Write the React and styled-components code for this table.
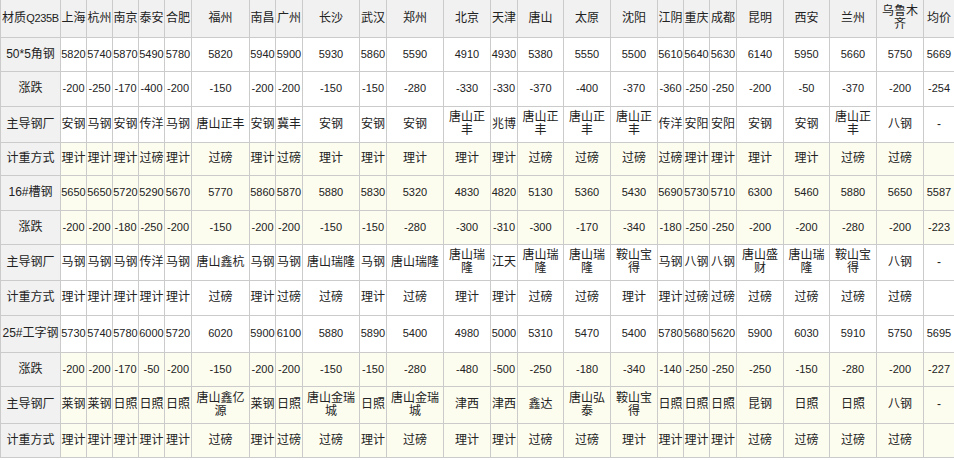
import React from 'react';
import styled, { createGlobalStyle } from 'styled-components';

const GlobalStyle = createGlobalStyle`
  html, body {
    margin: 0;
    padding: 0;
    background: #fff;
  }
  body {
    font-family: "Liberation Sans", "Noto Sans CJK SC", sans-serif;
    color: #222;
  }
`;

const COLS = [60, 26, 26, 26, 26, 27, 58, 26, 27, 57, 27, 57, 47, 27, 46, 47, 47, 26, 26, 27, 47, 46, 47, 47, 31];

const CITIES = [
  '上海', '杭州', '南京', '泰安', '合肥', '福州', '南昌', '广州', '长沙', '武汉', '郑州', '北京',
  '天津', '唐山', '太原', '沈阳', '江阴', '重庆', '成都', '昆明', '西安', '兰州', '乌鲁木齐', '均价',
];

const split = (s) => s.split(' ');

// label, cells, height, cream row, numeric row
const ROWS = [
  ['50*5角钢', split('5820 5740 5870 5490 5780 5820 5940 5900 5930 5860 5590 4910 4930 5380 5550 5500 5610 5640 5630 6140 5950 5660 5750 5669'), 34, false, true],
  ['涨跌', split('-200 -250 -170 -400 -200 -150 -200 -200 -150 -150 -280 -330 -330 -370 -400 -370 -360 -250 -250 -200 -50 -370 -200 -254'), 35, false, true],
  ['主导钢厂', split('安钢 马钢 安钢 传洋 马钢 唐山正丰 安钢 冀丰 安钢 安钢 安钢 唐山正丰 兆博 唐山正丰 唐山正丰 唐山正丰 传洋 安阳 安阳 安钢 安钢 唐山正丰 八钢 -'), 36, false, false],
  ['计重方式', [...split('理计 理计 理计 过磅 理计 过磅 理计 过磅 理计 理计 理计 理计 理计 过磅 过磅 过磅 过磅 理计 理计 理计 理计 过磅 过磅'), ''], 33, true, false],
  ['16#槽钢', split('5650 5650 5720 5290 5670 5770 5860 5870 5880 5830 5320 4830 4820 5130 5360 5430 5690 5730 5710 6300 5460 5880 5650 5587'), 35, true, true],
  ['涨跌', split('-200 -200 -180 -250 -200 -150 -200 -200 -150 -150 -280 -300 -310 -300 -170 -340 -180 -250 -250 -200 -200 -280 -200 -223'), 34, true, true],
  ['主导钢厂', split('马钢 马钢 马钢 传洋 马钢 唐山鑫杭 马钢 马钢 唐山瑞隆 马钢 唐山瑞隆 唐山瑞隆 江天 唐山瑞隆 唐山瑞隆 鞍山宝得 马钢 八钢 八钢 唐山盛财 唐山瑞隆 鞍山宝得 八钢 -'), 36, false, false],
  ['计重方式', [...split('理计 理计 理计 理计 理计 过磅 理计 过磅 过磅 理计 过磅 理计 理计 过磅 过磅 理计 理计 过磅 过磅 过磅 过磅 过磅 过磅'), ''], 35, false, false],
  ['25#工字钢', split('5730 5740 5780 6000 5720 6020 5900 6100 5880 5890 5400 4980 5000 5310 5470 5400 5780 5680 5620 5900 6030 5910 5750 5695'), 37, false, true],
  ['涨跌', split('-200 -200 -170 -50 -200 -150 -200 -200 -150 -150 -280 -480 -500 -250 -180 -340 -140 -250 -250 -250 -150 -280 -200 -227'), 34, true, true],
  ['主导钢厂', split('莱钢 莱钢 日照 日照 日照 唐山鑫亿源 莱钢 日照 唐山金瑞城 日照 唐山金瑞城 津西 津西 鑫达 唐山弘泰 鞍山宝得 日照 日照 日照 昆钢 日照 日照 八钢 -'), 37, true, false],
  ['计重方式', [...split('理计 理计 理计 理计 理计 过磅 理计 过磅 过磅 理计 过磅 理计 理计 过磅 过磅 理计 理计 理计 理计 过磅 过磅 过磅 过磅'), ''], 34, true, false],
];

const Wrap = styled.div`
  width: 954px;
  height: 460px;
  overflow: hidden;
`;

const PriceTable = styled.table`
  width: 954px;
  table-layout: fixed;
  border-collapse: collapse;
  font-size: 12px;
  line-height: 13px;
`;

const Col = styled.col`
  width: ${({ $w }) => $w}px;
`;

const Row = styled.tr`
  height: ${({ $h }) => $h}px;
  background: ${({ $cream }) => ($cream ? '#fcfcef' : '#fff')};
`;

const HeadRow = styled.tr`
  height: 37px;
  background: #f1f1f1;
`;

const Cell = styled.td`
  padding: 0;
  border: 1px solid #cbcbcb;
  text-align: center;
  vertical-align: middle;
  font-size: ${({ $num }) => ($num ? '11px' : '12px')};
  white-space: ${({ $num }) => ($num ? 'nowrap' : 'normal')};
  overflow: visible;
  word-break: break-all;
`;

const Label = styled(Cell)`
  background: #f1f1f1;
  font-size: 12px;
  white-space: normal;
`;

const HeadCell = styled(Cell).attrs({ as: 'th' })`
  font-weight: normal;
  border-top: none;
`;

const Grade = styled.span`
  font-size: 11px;
  letter-spacing: -0.3px;
`;

export default function App() {
  return (
    <Wrap>
      <GlobalStyle />
      <PriceTable>
        <colgroup>
          {COLS.map((w, i) => (
            <Col key={i} $w={w} />
          ))}
        </colgroup>
        <thead>
          <HeadRow>
            <HeadCell>
              材质<Grade>Q235B</Grade>
            </HeadCell>
            {CITIES.map((c) => (
              <HeadCell key={c}>{c}</HeadCell>
            ))}
          </HeadRow>
        </thead>
        <tbody>
          {ROWS.map(([label, cells, h, cream, num], r) => (
            <Row key={r} $h={h} $cream={cream}>
              <Label>{label}</Label>
              {cells.map((v, i) => (
                <Cell key={i} $num={num}>
                  {v}
                </Cell>
              ))}
            </Row>
          ))}
        </tbody>
      </PriceTable>
    </Wrap>
  );
}
